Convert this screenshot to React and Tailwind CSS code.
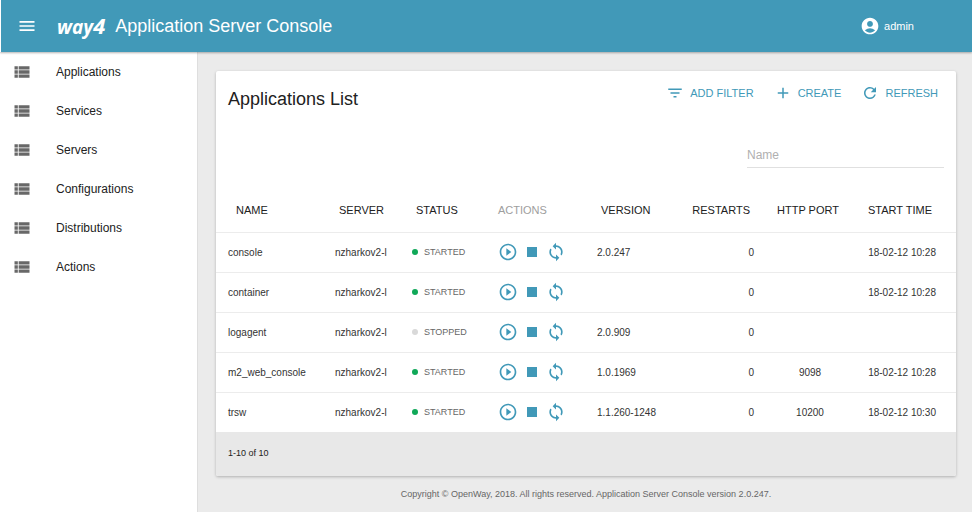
import clsx from 'clsx';
import {
  MdAccountCircle,
  MdAdd,
  MdFilterList,
  MdMenu,
  MdPlayCircleOutline,
  MdRefresh,
  MdStop,
  MdSync,
  MdViewList,
} from 'react-icons/md';

const menuItems = ['Applications', 'Services', 'Servers', 'Configurations', 'Distributions', 'Actions'];

const applications = [
  { name: 'console', server: 'nzharkov2-l', status: 'STARTED', version: '2.0.247', restarts: 0, port: '', startTime: '18-02-12 10:28' },
  { name: 'container', server: 'nzharkov2-l', status: 'STARTED', version: '', restarts: 0, port: '', startTime: '18-02-12 10:28' },
  { name: 'logagent', server: 'nzharkov2-l', status: 'STOPPED', version: '2.0.909', restarts: 0, port: '', startTime: '' },
  { name: 'm2_web_console', server: 'nzharkov2-l', status: 'STARTED', version: '1.0.1969', restarts: 0, port: '9098', startTime: '18-02-12 10:28' },
  { name: 'trsw', server: 'nzharkov2-l', status: 'STARTED', version: '1.1.260-1248', restarts: 0, port: '10200', startTime: '18-02-12 10:30' },
];

const columns = [
  { label: 'NAME', className: 'w-[107px] pl-5 text-left' },
  { label: 'SERVER', className: 'w-[77px] pl-4 text-left' },
  { label: 'STATUS', className: 'w-[86px] pl-4 text-left' },
  { label: 'ACTIONS', className: 'w-[99px] pl-3 text-left text-[#9e9e9e]' },
  { label: 'VERSION', className: 'w-[97px] pl-4 text-left' },
  { label: 'RESTARTS', className: 'w-[84px] pr-4 text-right' },
  { label: 'HTTP PORT', className: 'w-[84px] text-center' },
  { label: 'START TIME', className: 'w-[106px] pr-6 text-right' },
];

const Logo = () => (
  <span className="flex items-baseline font-['Open_Sans',sans-serif] leading-6 font-bold italic">
    <span className="text-[19px]">way</span>
    <span className="text-[22px]">4</span>
  </span>
);

const Header = () => (
  <header className="relative z-10 flex h-13 items-center border-l border-white bg-[#4199b8] pr-[58px] pl-4 text-white shadow-[0_1px_2px_rgba(0,0,0,0.3)]">
    <button type="button" aria-label="Menu">
      <MdMenu className="size-5" />
    </button>
    <h1 className="ml-5 flex items-center gap-2.5 text-[18px] leading-6">
      <Logo />
      Application Server Console
    </h1>
    <button type="button" className="ml-auto flex items-center gap-1 text-[11px]">
      <MdAccountCircle className="size-5" />
      admin
    </button>
  </header>
);

const Sidebar = () => (
  <nav className="w-[198px] shrink-0 border-r border-[#dedede] bg-white">
    <ul>
      {menuItems.map((item) => (
        <li key={item}>
          <a href="#" className="flex h-[39px] items-center gap-6 pl-3 text-[12px] text-[#212121]">
            <MdViewList className="size-5 text-[#686868]" />
            {item}
          </a>
        </li>
      ))}
    </ul>
  </nav>
);

const ToolbarButton = ({ icon: Icon, label }) => (
  <button type="button" className="flex h-5 items-center gap-1.5 text-[11px] text-[#4199b8]">
    <Icon className="size-[18px]" />
    {label}
  </button>
);

const Status = ({ value }) => (
  <span className="flex items-center gap-1.5 text-[9px] leading-3 text-[#666]">
    <span className={clsx('size-1.5 rounded-full', value === 'STARTED' ? 'bg-[#0fa858]' : 'bg-[#d9d9d9]')} />
    {value}
  </span>
);

const RowActions = () => (
  <div className="flex gap-1 text-[#4199b8]">
    <button type="button" aria-label="Start">
      <MdPlayCircleOutline className="size-5" />
    </button>
    <button type="button" aria-label="Stop">
      <MdStop className="size-5" />
    </button>
    <button type="button" aria-label="Restart">
      <MdSync className="size-5" />
    </button>
  </div>
);

const ApplicationsTable = () => (
  <table className="w-full table-fixed whitespace-nowrap">
    <thead>
      <tr className="h-11 text-[11px] text-[#212121]">
        {columns.map((col) => (
          <th key={col.label} scope="col" className={clsx('font-normal', col.className)}>
            {col.label}
          </th>
        ))}
      </tr>
    </thead>
    <tbody>
      {applications.map((app) => (
        <tr key={app.name} className="h-10 border-t border-[#ececec] text-[10px] text-[#333]">
          <td className="pl-3">{app.name}</td>
          <td className="pl-3">{app.server}</td>
          <td className="pl-3">
            <Status value={app.status} />
          </td>
          <td className="pl-3">
            <RowActions />
          </td>
          <td className="pl-3">{app.version}</td>
          <td className="pr-3 text-right">{app.restarts}</td>
          <td className="pl-1 text-center">{app.port}</td>
          <td className="pr-5 text-right">{app.startTime}</td>
        </tr>
      ))}
    </tbody>
  </table>
);

const App = () => (
  <div className="flex min-h-screen flex-col bg-[#ebebeb] font-['Liberation_Sans',Arial,sans-serif]">
    <Header />
    <div className="flex grow">
      <Sidebar />
      <main className="min-w-0 grow pt-[19px] pr-4 pl-[18px]">
        <section className="rounded-xs bg-white shadow-[0_1px_3px_rgba(0,0,0,0.25)]">
          <div className="flex items-start justify-between pt-3 pr-[18px] pl-3">
            <h2 className="pt-1 text-[18px] leading-6 text-[#212121]">Applications List</h2>
            <div className="flex gap-5">
              <ToolbarButton icon={MdFilterList} label="ADD FILTER" />
              <ToolbarButton icon={MdAdd} label="CREATE" />
              <ToolbarButton icon={MdRefresh} label="REFRESH" />
            </div>
          </div>
          <div className="flex justify-end pt-8 pr-3 pb-5">
            <input
              type="text"
              aria-label="Name"
              placeholder="Name"
              className="h-[25px] w-[197px] border-b border-[#e0e0e0] text-[12px] outline-none placeholder:text-[#b0b0b0]"
            />
          </div>
          <ApplicationsTable />
          <div className="flex h-11 items-center rounded-b-xs bg-[#e8e8e8] pl-3 text-[9px] text-[#212121]">1-10 of 10</div>
        </section>
        <footer className="py-3 text-center text-[9px] leading-3 text-[#666]">
          Copyright © OpenWay, 2018. All rights reserved. Application Server Console version 2.0.247.
        </footer>
      </main>
    </div>
  </div>
);

export default App;
